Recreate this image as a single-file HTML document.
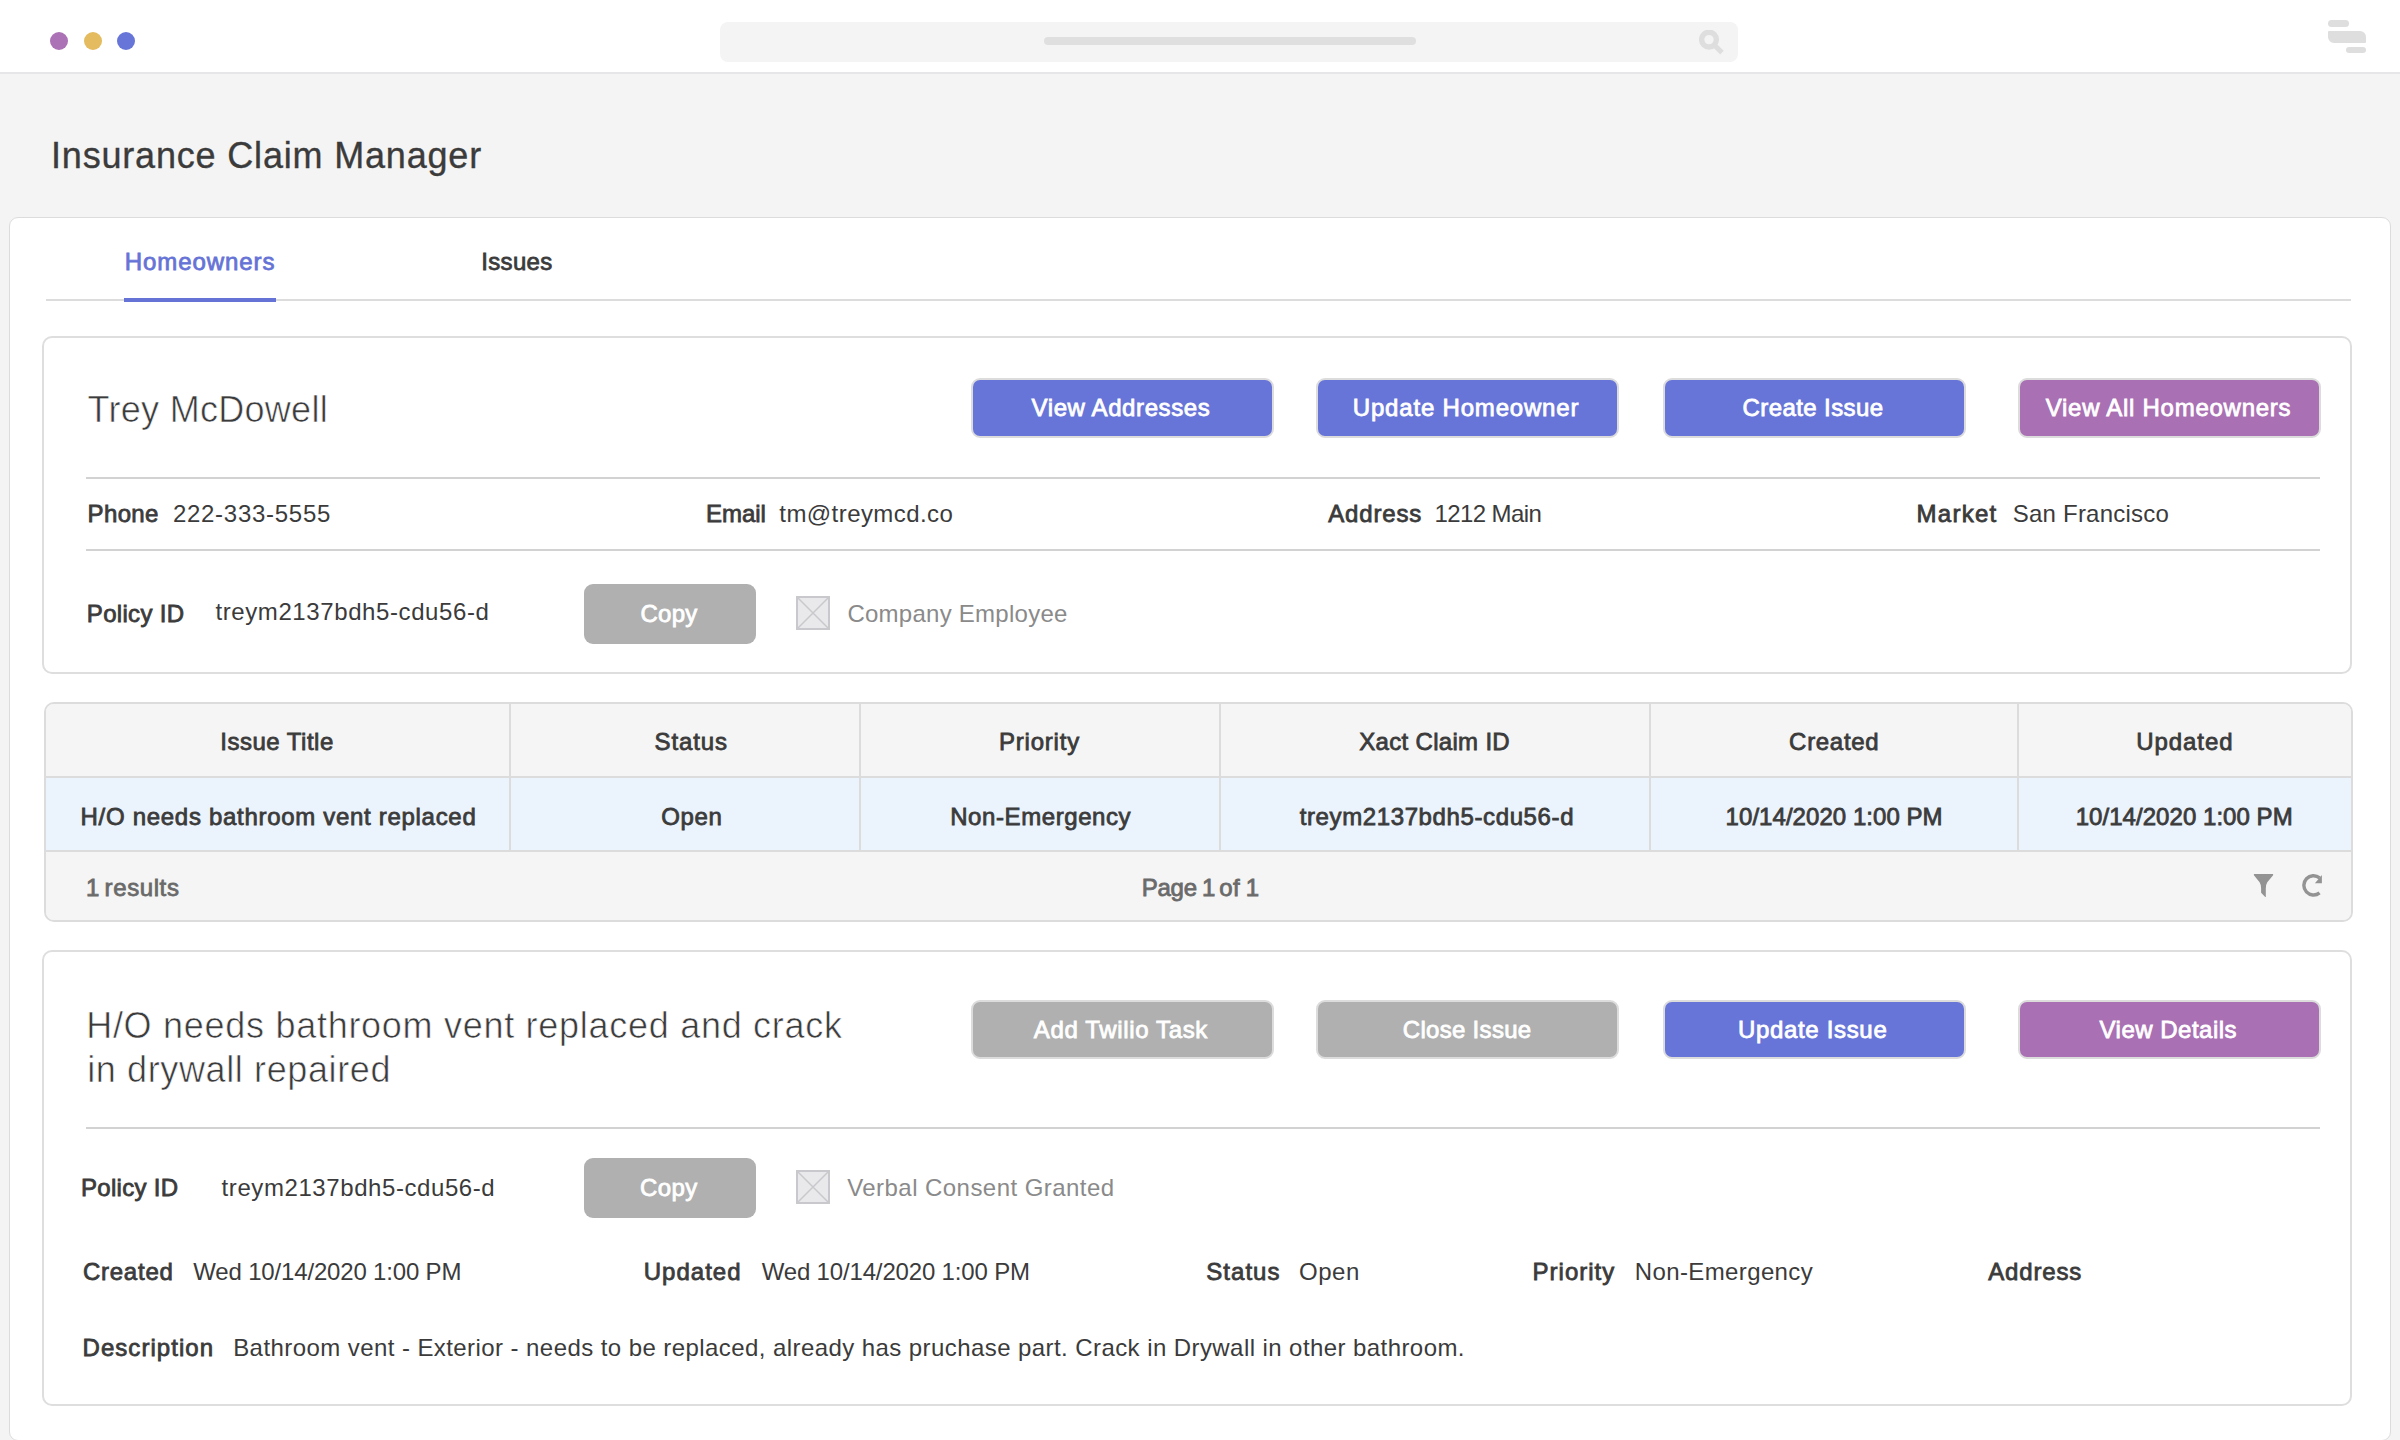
<!DOCTYPE html>
<html><head><meta charset="utf-8"><title>Insurance Claim Manager</title><style>
*{margin:0;padding:0;box-sizing:border-box}
html,body{width:2400px;height:1440px;overflow:hidden;background:#f4f4f4;position:relative;font-family:"Liberation Sans",sans-serif}
.t{position:absolute;white-space:nowrap}
.r24{font-size:24px;line-height:24px;font-weight:400}
.b24{font-size:24px;line-height:24px;font-weight:400;-webkit-text-stroke-width:0.8px}
.r36{font-size:36px;line-height:36px;font-weight:400;-webkit-text-stroke:0.6px #fff}
.m36{font-size:36px;line-height:36px;font-weight:400;-webkit-text-stroke:0.35px currentColor}
.topbar{position:absolute;left:0;top:0;width:2400px;height:74px;background:#fff;border-bottom:2px solid #e6e6e8}
.dot{position:absolute;top:32px;width:18px;height:18px;border-radius:50%}
.search{position:absolute;left:720px;top:22px;width:1018px;height:40px;border-radius:8px;background:#f4f4f4}
.pill{position:absolute;left:324px;top:15.25px;width:372px;height:8px;border-radius:4px;background:#dfdfdf}
.sicon{position:absolute;left:979px;top:7.5px}
.menu{position:absolute;left:2328px;top:20px;width:38px;height:33px}
.menu i{position:absolute;background:#dedede}
.outer{position:absolute;left:9px;top:217px;width:2382px;height:1224px;background:#fff;border:1px solid #dcdcdc;border-radius:9px}
.tabline{position:absolute;left:46px;top:299px;width:2305px;height:2px;background:#dcdcdc}
.tabul{position:absolute;left:124px;top:298px;width:152px;height:4px;background:#6673d6}
.card{position:absolute;left:42px;width:2310px;background:#fff;border:2px solid #dedede;border-radius:10px}
.hr{position:absolute;left:86px;width:2234px;height:2px;background:#d2d2d2}
.btn{position:absolute;border:2px solid #dcdcdc;border-radius:9px}
.btn.nob{border:none;border-radius:9px}
.chk{position:absolute;width:34px;height:34px;border:2px solid #c9c9cd;background:#e9e9eb}
.chk svg{position:absolute;left:-2px;top:-2px}
.table{position:absolute;left:44px;top:702px;width:2309px;height:220px;border:2px solid #dcdcdc;border-radius:10px;overflow:hidden;background:#f5f5f5}
.thead{position:absolute;left:0;top:0;width:100%;height:74px;background:#f5f5f5}
.trow{position:absolute;left:0;top:74px;width:100%;height:74px;background:#ebf3fd}
.tfoot{position:absolute;left:0;top:148px;width:100%;height:70px;background:#f5f5f5}
.vdiv{position:absolute;top:704px;width:2px;height:146px;background:#dcdcdc}
.hdiv{position:absolute;left:46px;width:2305px;height:2px;background:#dcdcdc}
</style></head>
<body>
<div class="topbar">
  <div class="dot" style="left:50px;background:#ab72b5"></div>
  <div class="dot" style="left:83.5px;background:#e4bb5f"></div>
  <div class="dot" style="left:117px;background:#6775d9"></div>
  <div class="search"><div class="pill"></div>
    <svg class="sicon" width="30" height="30" viewBox="0 0 30 30"><circle cx="10" cy="9.6" r="7.4" fill="none" stroke="#dedede" stroke-width="5.4"/><path d="M15 14.8 L23 22.6" stroke="#dedede" stroke-width="5"/></svg>
  </div>
  <div class="menu"><i style="left:0;top:0;width:21px;height:7px;border-radius:3.5px"></i><i style="left:0;top:11px;width:38px;height:12px;border-radius:1px 6px 1px 6px"></i><i style="left:18px;top:27px;width:20px;height:6px;border-radius:3px"></i></div>
</div>
<div class="outer"></div>
<div class="tabline"></div><div class="tabul"></div>
<div class="card" style="top:336px;height:338px"></div>
<div class="hr" style="top:477px"></div><div class="hr" style="top:549px"></div>
<div class="btn" style="left:970.5px;top:378px;width:303px;height:60px;background:#6875d8"></div>
<div class="btn" style="left:1316.4px;top:378px;width:303px;height:60px;background:#6875d8"></div>
<div class="btn" style="left:1662.6px;top:378px;width:303px;height:60px;background:#6875d8"></div>
<div class="btn" style="left:2018px;top:378px;width:303px;height:60px;background:#a970b3"></div>
<div class="btn nob" style="left:584px;top:584px;width:172px;height:60px;background:#b0b0b0"></div>
<div class="chk" style="left:796px;top:596px"><svg width="34" height="34" viewBox="0 0 34 34"><path d="M2 2 L32 32 M32 2 L2 32" stroke="#c9c9cd" stroke-width="1.5"/></svg></div>
<div class="table">
 <div class="thead"></div><div class="trow"></div><div class="tfoot"></div>
</div>
<div class="vdiv" style="left:509px"></div>
<div class="vdiv" style="left:859px"></div>
<div class="vdiv" style="left:1219px"></div>
<div class="vdiv" style="left:1649px"></div>
<div class="vdiv" style="left:2017px"></div>
<div class="hdiv" style="top:776px"></div><div class="hdiv" style="top:850px"></div>
<svg class="ficon" style="position:absolute;left:2253px;top:874px" width="21" height="24" viewBox="0 0 21 24"><path d="M0.9 0 H20.1 L20.1 1.3 L14.3 8.3 Q12.8 10.6 12.8 14.5 L12.8 23 L12.2 23 L8.1 18.7 L8.1 14.5 Q8.1 10.6 6.6 8.3 L0.9 1.3 Z" fill="#939393"/></svg>
<svg class="ricon" style="position:absolute;left:2300px;top:872px" width="26" height="26" viewBox="0 0 26 26"><path d="M19.54 20.9 A9.65 9.65 0 1 1 19.6 5.9" fill="none" stroke="#939393" stroke-width="3.4"/><path d="M14.9 11.3 L21.9 11.3 L21.9 3 Z" fill="#939393"/></svg>
<div class="card" style="top:950px;height:456px"></div>
<div class="hr" style="top:1127px"></div>
<div class="btn" style="left:970.5px;top:1000px;width:303px;height:59px;background:#b0b0b0"></div>
<div class="btn" style="left:1316.4px;top:1000px;width:303px;height:59px;background:#b0b0b0"></div>
<div class="btn" style="left:1662.6px;top:1000px;width:303px;height:59px;background:#6875d8"></div>
<div class="btn" style="left:2018px;top:1000px;width:303px;height:59px;background:#a970b3"></div>
<div class="btn nob" style="left:584px;top:1158px;width:172px;height:60px;background:#b0b0b0"></div>
<div class="chk" style="left:796px;top:1170px"><svg width="34" height="34" viewBox="0 0 34 34"><path d="M2 2 L32 32 M32 2 L2 32" stroke="#c9c9cd" stroke-width="1.5"/></svg></div>
<div class="t m36" style="left:51.0px;top:138px;color:#3b3b3b;letter-spacing:0.818px">Insurance Claim Manager</div>
<div class="t b24" style="left:124.8px;top:250px;color:#6673d6;letter-spacing:0.911px">Homeowners</div>
<div class="t b24" style="left:481.2px;top:250px;color:#3b3b3b;letter-spacing:0.340px">Issues</div>
<div class="t r36" style="left:87.5px;top:392px;color:#3b3b3b;letter-spacing:0.292px">Trey McDowell</div>
<div class="t b24" style="left:1031.5px;top:396px;color:#ffffff;letter-spacing:0.615px">View Addresses</div>
<div class="t b24" style="left:1352.8px;top:396px;color:#ffffff;letter-spacing:0.813px">Update Homeowner</div>
<div class="t b24" style="left:1742.5px;top:396px;color:#ffffff;letter-spacing:0.409px">Create Issue</div>
<div class="t b24" style="left:2045.7px;top:396px;color:#ffffff;letter-spacing:0.733px">View All Homeowners</div>
<div class="t b24" style="left:87.6px;top:502px;color:#3b3b3b;letter-spacing:0.350px">Phone</div>
<div class="t r24" style="left:172.9px;top:502px;color:#3b3b3b;letter-spacing:0.727px">222-333-5555</div>
<div class="t b24" style="left:705.9px;top:502px;color:#3b3b3b;letter-spacing:0.000px">Email</div>
<div class="t r24" style="left:779.3px;top:502px;color:#3b3b3b;letter-spacing:0.433px">tm@treymcd.co</div>
<div class="t b24" style="left:1328.2px;top:502px;color:#3b3b3b;letter-spacing:0.850px">Address</div>
<div class="t r24" style="left:1434.5px;top:502px;color:#3b3b3b;letter-spacing:-0.588px">1212 Main</div>
<div class="t b24" style="left:1916.5px;top:502px;color:#3b3b3b;letter-spacing:1.280px">Market</div>
<div class="t r24" style="left:2012.8px;top:502px;color:#3b3b3b;letter-spacing:0.217px">San Francisco</div>
<div class="t b24" style="left:86.8px;top:602px;color:#3b3b3b;letter-spacing:0.325px">Policy ID</div>
<div class="t r24" style="left:215.4px;top:600px;color:#3b3b3b;letter-spacing:0.600px">treym2137bdh5-cdu56-d</div>
<div class="t b24" style="left:640.4px;top:602px;color:#ffffff;letter-spacing:0.300px">Copy</div>
<div class="t r24" style="left:847.4px;top:602px;color:#8a8a8a;letter-spacing:0.260px">Company Employee</div>
<div class="t b24" style="left:220.3px;top:730px;color:#3b3b3b;letter-spacing:0.490px">Issue Title</div>
<div class="t b24" style="left:654.5px;top:730px;color:#3b3b3b;letter-spacing:0.900px">Status</div>
<div class="t b24" style="left:999.0px;top:730px;color:#3b3b3b;letter-spacing:0.786px">Priority</div>
<div class="t b24" style="left:1359.3px;top:730px;color:#3b3b3b;letter-spacing:0.308px">Xact Claim ID</div>
<div class="t b24" style="left:1789.1px;top:730px;color:#3b3b3b;letter-spacing:0.700px">Created</div>
<div class="t b24" style="left:2136.2px;top:730px;color:#3b3b3b;letter-spacing:0.933px">Updated</div>
<div class="t b24" style="left:80.6px;top:805px;color:#3b3b3b;letter-spacing:0.697px">H/O needs bathroom vent replaced</div>
<div class="t b24" style="left:661.2px;top:805px;color:#3b3b3b;letter-spacing:0.667px">Open</div>
<div class="t b24" style="left:950.2px;top:805px;color:#3b3b3b;letter-spacing:0.583px">Non-Emergency</div>
<div class="t b24" style="left:1299.7px;top:805px;color:#3b3b3b;letter-spacing:0.615px">treym2137bdh5-cdu56-d</div>
<div class="t b24" style="left:1725.6px;top:805px;color:#3b3b3b;letter-spacing:0.047px">10/14/2020 1:00 PM</div>
<div class="t b24" style="left:2075.7px;top:805px;color:#3b3b3b;letter-spacing:0.047px">10/14/2020 1:00 PM</div>
<div class="t b24" style="left:86.1px;top:876px;color:#6a6a6a;letter-spacing:0.000px">1</div>
<div class="t b24" style="left:104.6px;top:876px;color:#6a6a6a;letter-spacing:0.600px">results</div>
<div class="t b24" style="left:1141.7px;top:876px;color:#6a6a6a;letter-spacing:-0.233px">Page</div>
<div class="t b24" style="left:1202.0px;top:876px;color:#6a6a6a;letter-spacing:0.000px">1</div>
<div class="t b24" style="left:1219.3px;top:876px;color:#6a6a6a;letter-spacing:0.400px">of</div>
<div class="t b24" style="left:1245.7px;top:876px;color:#6a6a6a;letter-spacing:0.000px">1</div>
<div class="t r36" style="left:86.2px;top:1008px;color:#3b3b3b;letter-spacing:0.717px">H/O needs bathroom vent replaced and crack</div>
<div class="t r36" style="left:87.2px;top:1052px;color:#3b3b3b;letter-spacing:0.617px">in drywall repaired</div>
<div class="t b24" style="left:1033.8px;top:1018px;color:#ffffff;letter-spacing:0.643px">Add Twilio Task</div>
<div class="t b24" style="left:1402.8px;top:1018px;color:#ffffff;letter-spacing:0.300px">Close Issue</div>
<div class="t b24" style="left:1738.0px;top:1018px;color:#ffffff;letter-spacing:0.664px">Update Issue</div>
<div class="t b24" style="left:2099.5px;top:1018px;color:#ffffff;letter-spacing:0.500px">View Details</div>
<div class="t b24" style="left:81.0px;top:1176px;color:#3b3b3b;letter-spacing:0.312px">Policy ID</div>
<div class="t r24" style="left:221.6px;top:1176px;color:#3b3b3b;letter-spacing:0.580px">treym2137bdh5-cdu56-d</div>
<div class="t b24" style="left:640.0px;top:1176px;color:#ffffff;letter-spacing:0.433px">Copy</div>
<div class="t r24" style="left:847.2px;top:1176px;color:#8a8a8a;letter-spacing:0.448px">Verbal Consent Granted</div>
<div class="t b24" style="left:82.9px;top:1260px;color:#3b3b3b;letter-spacing:0.767px">Created</div>
<div class="t r24" style="left:193.3px;top:1260px;color:#3b3b3b;letter-spacing:-0.171px">Wed 10/14/2020 1:00 PM</div>
<div class="t b24" style="left:643.7px;top:1260px;color:#3b3b3b;letter-spacing:1.017px">Updated</div>
<div class="t r24" style="left:761.7px;top:1260px;color:#3b3b3b;letter-spacing:-0.162px">Wed 10/14/2020 1:00 PM</div>
<div class="t b24" style="left:1206.3px;top:1260px;color:#3b3b3b;letter-spacing:1.020px">Status</div>
<div class="t r24" style="left:1299.0px;top:1260px;color:#3b3b3b;letter-spacing:0.533px">Open</div>
<div class="t b24" style="left:1532.6px;top:1260px;color:#3b3b3b;letter-spacing:0.986px">Priority</div>
<div class="t r24" style="left:1634.8px;top:1260px;color:#3b3b3b;letter-spacing:0.375px">Non-Emergency</div>
<div class="t b24" style="left:1988.2px;top:1260px;color:#3b3b3b;letter-spacing:0.833px">Address</div>
<div class="t b24" style="left:82.5px;top:1336px;color:#3b3b3b;letter-spacing:1.050px">Description</div>
<div class="t r24" style="left:233.2px;top:1336px;color:#3b3b3b;letter-spacing:0.425px">Bathroom vent - Exterior - needs to be replaced, already has pruchase part. Crack in Drywall in other bathroom.</div>
</body></html>
